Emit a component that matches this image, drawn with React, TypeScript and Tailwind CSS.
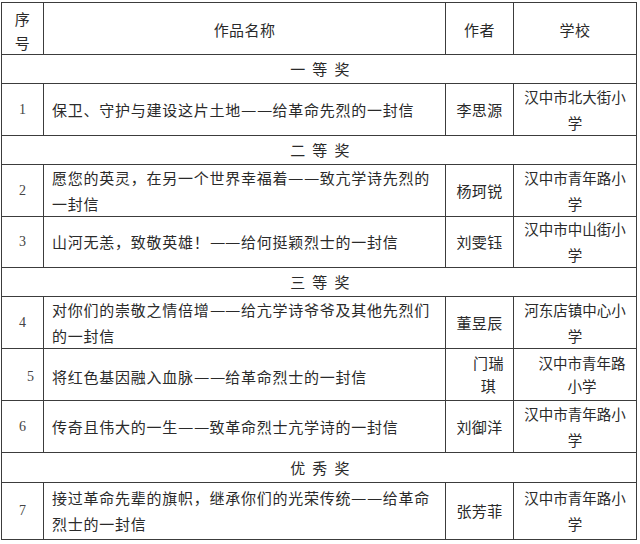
import React from "react";

type Row = {
  num: string;
  name: string[];
  author: string[];
  school: string[];
  special?: boolean;
};

type Section = { section: string };

const items: (Row | Section)[] = [
  { section: "一 等 奖" },
  {
    num: "1",
    name: ["保卫、守护与建设这片土地——给革命先烈的一封信"],
    author: ["李思源"],
    school: ["汉中市北大街小", "学"],
  },
  { section: "二 等 奖" },
  {
    num: "2",
    name: ["愿您的英灵，在另一个世界幸福着——致亢学诗先烈的", "一封信"],
    author: ["杨珂锐"],
    school: ["汉中市青年路小", "学"],
  },
  {
    num: "3",
    name: ["山河无恙，致敬英雄！——给何挺颖烈士的一封信"],
    author: ["刘雯钰"],
    school: ["汉中市中山街小", "学"],
  },
  { section: "三 等 奖" },
  {
    num: "4",
    name: ["对你们的崇敬之情倍增——给亢学诗爷爷及其他先烈们", "的一封信"],
    author: ["董昱辰"],
    school: ["河东店镇中心小", "学"],
  },
  {
    num: "5",
    name: ["将红色基因融入血脉——给革命烈士的一封信"],
    author: ["门瑞", "琪"],
    school: ["汉中市青年路", "小学"],
    special: true,
  },
  {
    num: "6",
    name: ["传奇且伟大的一生——致革命烈士亢学诗的一封信"],
    author: ["刘御洋"],
    school: ["汉中市青年路小", "学"],
  },
  { section: "优 秀 奖" },
  {
    num: "7",
    name: ["接过革命先辈的旗帜，继承你们的光荣传统——给革命", "烈士的一封信"],
    author: ["张芳菲"],
    school: ["汉中市青年路小", "学"],
  },
];

const cell = "border-r border-b border-[#3c3c3c] flex items-center";

function Text({ line }: { line: string }) {
  const parts = line.split(/(—)/);
  return (
    <>
      {parts.map((p, i) =>
        p === "—" ? (
          <span key={i} className="inline-block w-[15.75px] text-center tracking-normal overflow-hidden align-top">
            <span className="inline-block scale-x-[1.15]">—</span>
          </span>
        ) : (
          <React.Fragment key={i}>{p}</React.Fragment>
        )
      )}
    </>
  );
}

function Lines({ lines }: { lines: string[] }) {
  return (
    <>
      {lines.map((l, i) => (
        <React.Fragment key={i}>
          {i > 0 && <br />}
          <Text line={l} />
        </React.Fragment>
      ))}
    </>
  );
}

export default function App() {
  return (
    <div
      className="w-[640px] h-[544px] bg-white text-[#2a2a2a] pt-[2px] pl-[1px]"
      style={{ fontFamily: '"Noto Sans CJK SC", "Noto Sans", sans-serif' }}
    >
      <div className="w-[636px] grid grid-cols-[42px_402px_68px_123px] grid-rows-[52px_29px_52px_29px_52px_51px_29px_52px_52px_52px_30px_57px] border-l border-t border-[#3c3c3c] text-[15px] tracking-[0.4px] leading-[26px]">
        {/* header */}
        <div className={`${cell} justify-center text-center leading-[24px] pt-[4px]`}>
          序<br />号
        </div>
        <div className={`${cell} justify-center pt-[2px]`}>作品名称</div>
        <div className={`${cell} justify-center pt-[2px]`}>作者</div>
        <div className={`${cell} justify-center pt-[2px]`}>学校</div>

        {items.map((it, idx) => {
          if ("section" in it) {
            return (
              <div
                key={idx}
                className={`${cell} col-span-4 justify-center [word-spacing:3px] pl-[2px]`}
              >
                {it.section}
              </div>
            );
          }
          const r = it;
          if (r.special) {
            return (
              <React.Fragment key={idx}>
                <div
                  className={`${cell} justify-center pl-[16px] pt-[4px] text-[14px] text-[#444] tracking-normal`}
                  style={{ fontFamily: '"Liberation Serif", serif' }}
                >
                  {r.num}
                </div>
                <div className={`${cell} justify-start pl-[8px] pt-[4px] tracking-[0.75px]`}>
                  <span>
                    <Lines lines={r.name} />
                  </span>
                </div>
                <div className={`${cell} justify-center text-center leading-[23px] pl-[18px] pb-[1px]`}>
                  <span>
                    <Lines lines={r.author} />
                  </span>
                </div>
                <div className={`${cell} justify-center text-center leading-[23px] pl-[14px] pb-[1px] text-[14.5px] tracking-normal`}>
                  <span>
                    <Lines lines={r.school} />
                  </span>
                </div>
              </React.Fragment>
            );
          }
          return (
            <React.Fragment key={idx}>
              <div
                className={`${cell} justify-center text-[14px] text-[#444] tracking-normal`}
                style={{ fontFamily: '"Liberation Serif", serif' }}
              >
                {r.num}
              </div>
              <div className={`${cell} justify-start pl-[8px] tracking-[0.75px]`}>
                <span>
                  <Lines lines={r.name} />
                </span>
              </div>
              <div className={`${cell} justify-center text-center`}>
                <span>
                  <Lines lines={r.author} />
                </span>
              </div>
              <div className={`${cell} justify-center text-center text-[14.5px] tracking-normal`}>
                <span>
                  <Lines lines={r.school} />
                </span>
              </div>
            </React.Fragment>
          );
        })}
      </div>
    </div>
  );
}
